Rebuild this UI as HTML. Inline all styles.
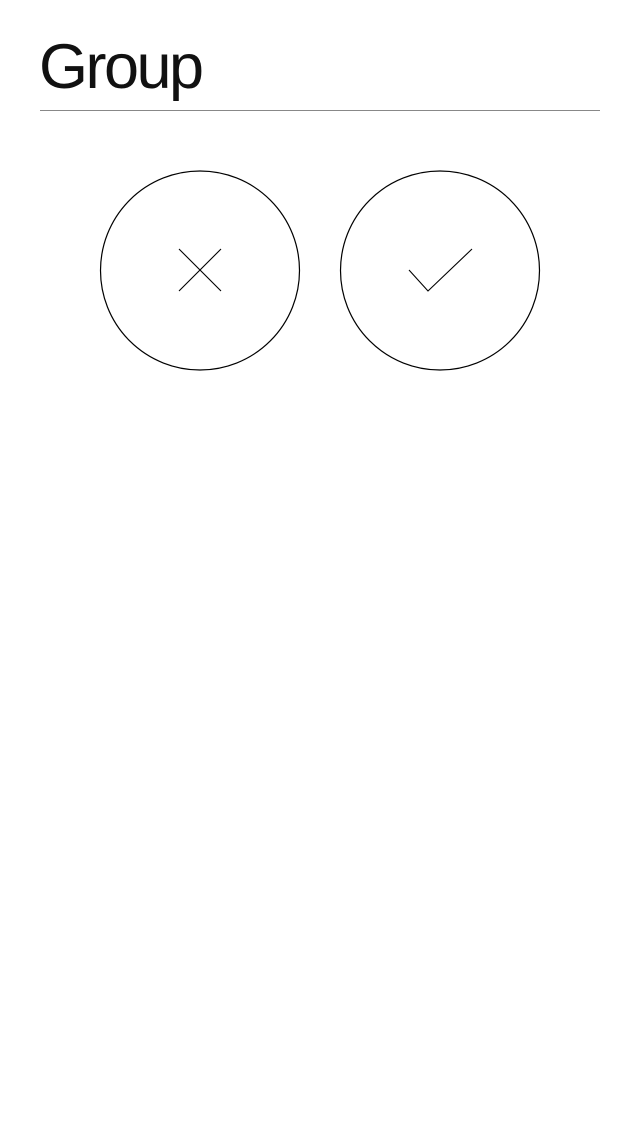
<!DOCTYPE html>
<html><head><meta charset="utf-8"><style>
html,body{margin:0;padding:0;background:#fff;width:640px;height:1136px;overflow:hidden}
.t{position:absolute;left:39px;top:29px;font-family:"Liberation Sans",sans-serif;font-size:63px;line-height:76px;color:#111;letter-spacing:-2.5px}
.l{position:absolute;left:40px;top:110px;width:560px;height:1px;background:#888}
svg{position:absolute;left:0;top:0}
</style></head><body>
<div class="t">Group</div>
<div class="l"></div>
<svg width="640" height="400">
<circle cx="200" cy="270.5" r="99.5" fill="none" stroke="#000" stroke-width="1.2"/>
<circle cx="440" cy="270.5" r="99.5" fill="none" stroke="#000" stroke-width="1.2"/>
<path d="M179 249L221 291M221 249L179 291" stroke="#000" stroke-width="1.1" fill="none"/>
<path d="M409 270L428 291L472 249" stroke="#000" stroke-width="1.1" fill="none"/>
</svg>
</body></html>
